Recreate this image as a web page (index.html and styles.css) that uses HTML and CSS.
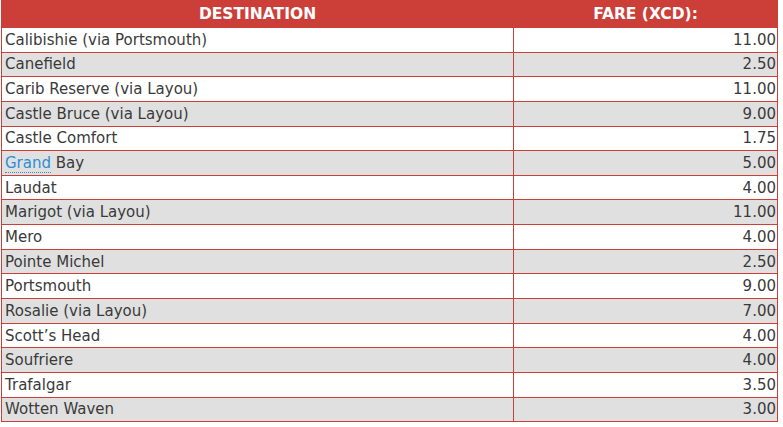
FILE: index.html
```html
<!DOCTYPE html>
<html>
<head>
<meta charset="utf-8">
<link rel="stylesheet" href="styles.css">
</head>
<body>
<table class="fares">
<thead>
<tr><th class="dest">DESTINATION</th><th class="fare">FARE (XCD):</th></tr>
</thead>
<tbody>
<tr><td>Calibishie (via Portsmouth)</td><td class="num">11.00</td></tr>
<tr><td>Canefield</td><td class="num">2.50</td></tr>
<tr><td>Carib Reserve (via Layou)</td><td class="num">11.00</td></tr>
<tr><td>Castle Bruce (via Layou)</td><td class="num">9.00</td></tr>
<tr><td>Castle Comfort</td><td class="num">1.75</td></tr>
<tr><td><a class="link" href="#">Grand</a> Bay</td><td class="num">5.00</td></tr>
<tr><td>Laudat</td><td class="num">4.00</td></tr>
<tr><td>Marigot (via Layou)</td><td class="num">11.00</td></tr>
<tr><td>Mero</td><td class="num">4.00</td></tr>
<tr><td>Pointe Michel</td><td class="num">2.50</td></tr>
<tr><td>Portsmouth</td><td class="num">9.00</td></tr>
<tr><td>Rosalie (via Layou)</td><td class="num">7.00</td></tr>
<tr><td>Scott’s Head</td><td class="num">4.00</td></tr>
<tr><td>Soufriere</td><td class="num">4.00</td></tr>
<tr><td>Trafalgar</td><td class="num">3.50</td></tr>
<tr><td>Wotten Waven</td><td class="num">3.00</td></tr>
</tbody>
</table>
</body>
</html>
```
FILE: styles.css
```css
html, body {
  margin: 0;
  padding: 0;
  background: #ffffff;
}
body {
  font-family: "DejaVu Sans", Verdana, sans-serif;
  color: #3a3a3a;
}
.fares {
  border-collapse: collapse;
  width: 777px;
  margin-left: 1px;
  font-size: 15px;
}
.fares th {
  background: #cc3f38;
  color: #ffffff;
  font-weight: bold;
  height: 26px;
  padding: 0;
  text-align: center;
  font-size: 15.5px;
  line-height: 18px;
  border: 1px solid #cc3f38;
}
.fares th.dest { width: 511px; }
.fares td {
  border: 1px solid #cc3f38;
  height: 23.65px;
  padding: 0 1px 0 3px;
  line-height: 18px;
}
.fares tbody tr:nth-child(even) td {
  background: #e0e0e0;
}
.fares td.num {
  text-align: right;
}
.link {
  color: #2a8fd6;
  text-decoration: none;
  border-bottom: 1px dotted #2a8fd6;
}
```
